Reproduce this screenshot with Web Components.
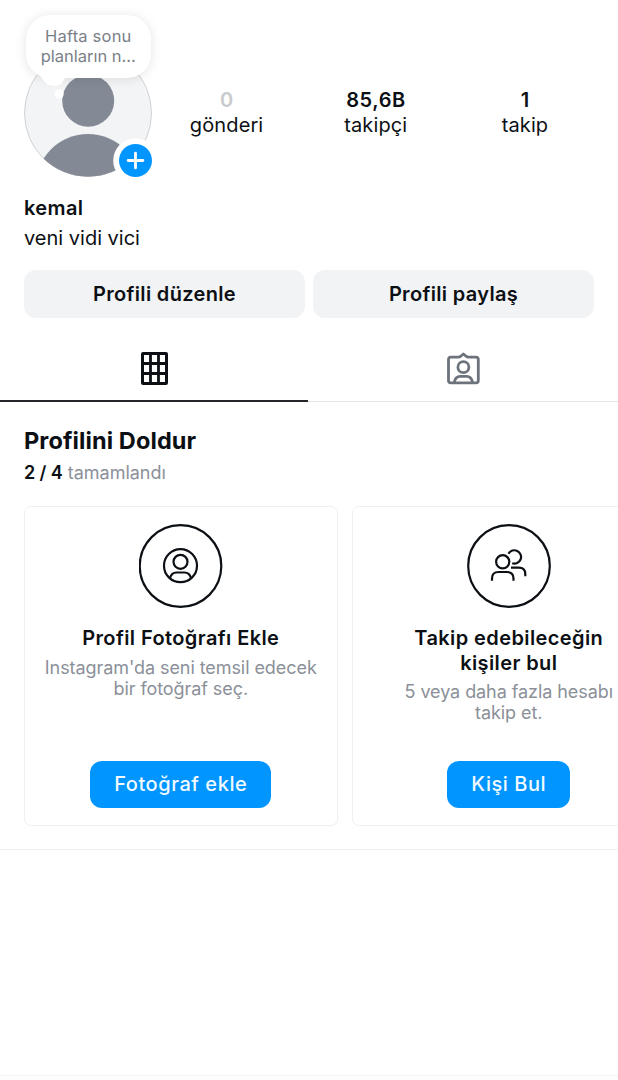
<!DOCTYPE html>
<html lang="tr">
<head>
<meta charset="utf-8">
<title>kemal</title>
<style>
html, body { margin: 0; background: #fff; overflow: hidden; }
body { font-family: Inter, "Noto Sans", sans-serif; color: #0c1014; }
</style>
</head>
<body>
<profile-page></profile-page>

<template id="t-avatar">
  <style>
    :host { display: block; position: relative; width: 128px; height: 128px; }
    svg { display: block; }
    .badge { position: absolute; left: 88px; top: 88px; }
    .tail { position: absolute; left: 0; top: -40px; }
    .note { position: absolute; left: 2px; top: -34px; width: 124.5px; height: 62.5px; box-sizing: border-box;
      padding-top: 11px; border-radius: 24px; background: #fff; text-align: center; color: #7b7f87;
      font-size: 16.500px; line-height: 20px; box-shadow: 0 1px 12px rgba(0,0,0,.11); }
    .note span { display: block; letter-spacing: .2px; }
    .note div + div span { letter-spacing: 0; }
  </style>
  <svg width="128" height="128" viewBox="0 0 128 128">
    <defs><clipPath id="c"><circle cx="64" cy="64" r="63.700"/></clipPath></defs>
    <circle cx="64" cy="64" r="63.500" fill="#f2f4f6" stroke="#d0d1d4"/>
    <g clip-path="url(#c)" fill="#848a95">
      <circle cx="64.200" cy="51.700" r="26"/>
      <circle cx="64" cy="137.500" r="52.500"/>
    </g>
  </svg>
  <div class="note"><div><span><slot name="line1"></slot></span></div><div><span><slot name="line2"></slot></span></div></div>
  <svg class="tail" width="70" height="100" viewBox="0 0 70 100">
    <path d="M14 65 Q18 68 19.500 71.500 C21.500 75 25 76.900 30 76.900 C35.500 76.900 38 74.500 39.500 71.500 Q40.500 68.500 44 68 V62 H14Z" fill="#fff"/>
    <circle cx="35.200" cy="85" r="4.500" fill="#fff"/>
  </svg>
  <svg class="badge" width="46" height="46" viewBox="0 0 46 46">
    <circle cx="23.500" cy="23.500" r="22.300" fill="#fff"/>
    <circle cx="23.500" cy="23.500" r="16.500" fill="#0095ff"/>
    <path d="M23.500 16.100V30.900M16.100 23.500H30.900" stroke="#fff" stroke-width="2.800" stroke-linecap="round"/>
  </svg>
</template>

<template id="t-stat">
  <style>
    :host { display: block; width: 149.2px; text-align: center; font-size: 20px; line-height: 25px; }
    b { display: block; font-weight: 600; letter-spacing: .6px; margin-right: -.6px; }
    :host([empty]) b { color: #c9cacc; }
    span { display: block; letter-spacing: .12px; }
  </style>
  <b><slot name="count"></slot></b><span><slot></slot></span>
</template>

<template id="t-button">
  <style>
    :host { display: flex; align-items: center; justify-content: center; height: 48px; border-radius: 12px;
      background: #f2f3f5; font-size: 20px; font-weight: 600; letter-spacing: .33px; }
    :host([primary]) { height: 47.5px; padding: 0 24px; background: #0095ff; color: #f2faff; font-weight: 500; letter-spacing: .56px; }
  </style>
  <slot></slot>
</template>

<template id="t-tabs">
  <style>
    :host { display: grid; grid-template-columns: 308px 1fr; height: 84.500px; }
    div { display: flex; justify-content: center; padding-top: 30px; box-sizing: border-box;
      border-bottom: 1.500px solid #e4e5e8; height: 84px; }
    .on { border-bottom: 2px solid #24262a; }
    svg { display: block; }
  </style>
  <div class="on">
    <svg width="40" height="40" viewBox="0 0 40 40" fill="none" stroke="#0c1014" stroke-width="3">
      <rect x="8.500" y="5.500" width="24" height="30" rx=".5"/>
      <path d="M16.500 5V36M24.500 5V36M8 15.500H33M8 25.500H33" stroke-width="2.800"/>
    </svg>
  </div>
  <div>
    <svg width="40" height="40" viewBox="0 0 40 40" fill="none" stroke="#6c737c" stroke-width="2.800" stroke-linejoin="round" stroke-linecap="round">
      <path d="M7.900 9.200H15.200Q16.800 9.200 18 8L20.400 6L22.800 8Q24 9.200 25.600 9.200H32.900Q35.300 9.200 35.300 11.600V32.500Q35.300 34.900 32.900 34.900H7.900Q5.500 34.900 5.500 32.500V11.600Q5.500 9.200 7.900 9.200Z"/>
      <circle cx="20.400" cy="19.200" r="5.500"/>
      <path d="M11.200 34.500C12 30.500 14.300 28.400 17.200 28.400H23.600C26.500 28.400 28.800 30.500 29.600 34.500"/>
    </svg>
  </div>
</template>

<template id="t-card">
  <style>
    :host { display: flex; flex-direction: column; align-items: center; flex: none; box-sizing: border-box;
      width: 313.500px; height: 320px; padding: 17px 0 17px; border: 1px solid #eeeff0; border-radius: 7px; text-align: center; }
    slot[name=icon] { display: block; height: 84px; }
    h3 { margin: 18.300px 0 0; font-size: 20px; line-height: 24.500px; font-weight: 600; letter-spacing: .4px; white-space: pre-line; }
    p { margin: 6.200px 0 0; font-size: 18px; line-height: 21px; color: #8b9099; letter-spacing: -.07px; white-space: pre-line; }
    footer { margin-top: auto; }
  </style>
  <slot name="icon"></slot>
  <h3><slot name="title"></slot></h3>
  <p><slot name="text"></slot></p>
  <footer><slot name="action"></slot></footer>
</template>

<template id="t-page">
  <style>
    :host { display: flex; flex-direction: column; width: 618px; height: 1080px; overflow: hidden; }
    header { display: flex; height: 193px; box-sizing: border-box; padding: 49px 0 0 24px; }
    .stats { display: flex; padding-top: 39px; }
    .bio { padding-left: 24px; font-size: 20px; line-height: 30px; height: 77px; box-sizing: border-box; }
    .bio b { display: block; font-weight: 600; letter-spacing: .4px; }
    .actions { display: grid; grid-template-columns: 1fr 1fr; gap: 8px; padding: 0 24px; }
    h2 { margin: 23.500px 0 0 24px; font-size: 23.500px; line-height: 30px; font-weight: 700; letter-spacing: .1px; }
    .progress { margin: 5px 0 0 24px; font-size: 18px; line-height: 24px; color: #8b9099; height: 45px; box-sizing: border-box; }
    .progress b { font-weight: 600; color: #0c1014; letter-spacing: -.1px; }
    .cards { display: flex; gap: 14.500px; padding: 0 0 23px 24px; border-bottom: 1.500px solid #eeeff1; }
    .end { margin-top: auto; height: 4px; border-top: 1.500px solid #f2f3f4; background: #fdfdfd; }
    svg { display: block; }
  </style>
  <header>
    <profile-avatar><span slot="line1">Hafta sonu</span><span slot="line2">planların n...</span></profile-avatar>
    <div class="stats">
      <profile-stat empty><span slot="count">0</span>gönderi</profile-stat>
      <profile-stat><span slot="count">85,6B</span>takipçi</profile-stat>
      <profile-stat><span slot="count">1</span>takip</profile-stat>
    </div>
  </header>
  <div class="bio"><b>kemal</b><span>veni vidi vici</span></div>
  <div class="actions"><ui-button>Profili düzenle</ui-button><ui-button>Profili paylaş</ui-button></div>
  <profile-tabs></profile-tabs>
  <h2>Profilini Doldur</h2>
  <div class="progress"><b>2 / 4</b> tamamlandı</div>
  <div class="cards">
    <task-card>
      <svg slot="icon" width="84" height="84" viewBox="0 0 84 84" fill="none" stroke="#0c1014" stroke-width="2.200">
        <circle cx="41.500" cy="42" r="40.800"/>
        <circle cx="41.500" cy="41.700" r="16.500"/>
        <circle cx="41.500" cy="37.800" r="7"/>
        <path d="M31 54C32 50.500 34 48.500 37.500 48.500H45.500C49 48.500 51 50.500 52 54"/>
      </svg>
      <span slot="title">Profil Fotoğrafı Ekle</span>
      <span slot="text">Instagram'da seni temsil edecek
bir fotoğraf seç.</span>
      <ui-button primary slot="action">Fotoğraf ekle</ui-button>
    </task-card>
    <task-card>
      <svg slot="icon" width="84" height="84" viewBox="0 0 84 84" fill="none" stroke="#0c1014" stroke-width="2.200">
        <circle cx="42" cy="42" r="40.800"/>
        <circle cx="35.700" cy="37.800" r="6.600"/>
        <path d="M25 56.800V54.500Q25 48 31.500 48H40Q46.500 48 46.500 54.500V56.800"/>
        <path d="M41.500 29.700A6.700 6.700 0 1 1 45.200 39.300M44 43.600H51.800Q58.300 43.600 58.300 50.100V52.200"/>
      </svg>
      <span slot="title">Takip edebileceğin
kişiler bul</span>
      <span slot="text">5 veya daha fazla hesabı
takip et.</span>
      <ui-button primary slot="action">Kişi Bul</ui-button>
    </task-card>
  </div>
  <div class="end"></div>
</template>

<script>
const define = (name, id) => customElements.define(name, class extends HTMLElement {
  constructor() {
    super();
    this.attachShadow({ mode: 'open' }).append(document.getElementById(id).content.cloneNode(true));
  }
});
define('profile-avatar', 't-avatar');
define('profile-stat', 't-stat');
define('ui-button', 't-button');
define('profile-tabs', 't-tabs');
define('task-card', 't-card');
define('profile-page', 't-page');
</script>
</body>
</html>
